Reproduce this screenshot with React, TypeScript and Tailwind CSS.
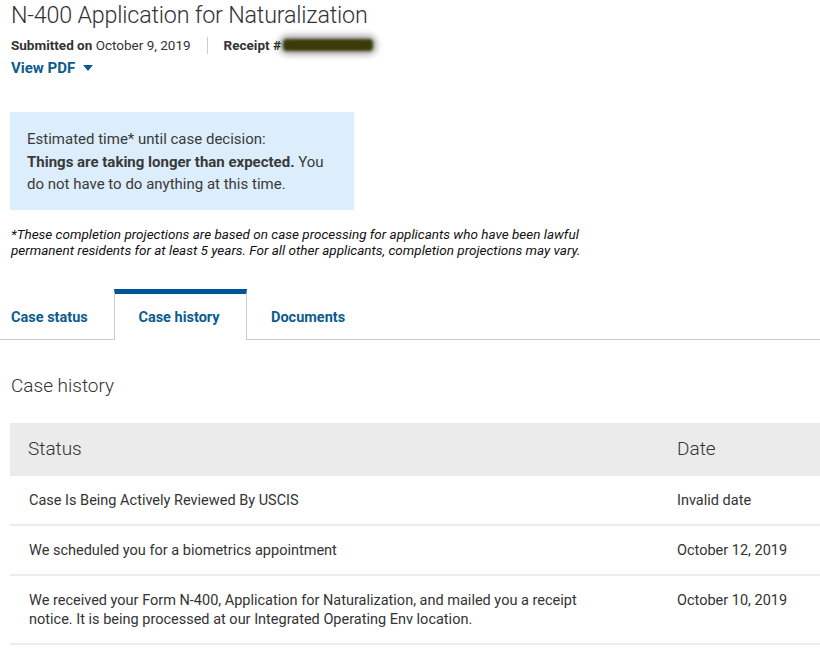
import React from 'react';

const rows = [
  { status: 'Case Is Being Actively Reviewed By USCIS', date: 'Invalid date' },
  { status: 'We scheduled you for a biometrics appointment', date: 'October 12, 2019' },
  {
    status:
      'We received your Form N-400, Application for Naturalization, and mailed you a receipt notice. It is being processed at our Integrated Operating Env location.',
    date: 'October 10, 2019',
  },
];

const tabs = ['Case status', 'Case history', 'Documents'];

export default function App() {
  return (
    <div className="min-h-screen bg-white text-[#333] font-['Roboto','Liberation_Sans',sans-serif] overflow-hidden">
      {/* Header */}
      <div className="pl-[11px]">
        <h1 className="text-[23.3px] leading-[30px] font-light text-[#333] tracking-[-0.2px]">
          N-400 Application for Naturalization
        </h1>
        <div className="flex items-center h-[28px] text-[13.5px] mt-[1px]">
          <span>
            <b className="font-bold">Submitted on</b> October 9, 2019
          </span>
          <span className="mx-[16px] h-[17px] w-px bg-[#ccc]" />
          <b className="font-bold">Receipt #</b>
          <span className="ml-[2px] inline-block h-[12px] w-[90px] rounded-sm bg-[#3b3a08] blur-[1.5px] shadow-[0_0_6px_3px_rgba(0,0,0,0.4)]" />
        </div>
        <button className="flex items-center gap-[8px] text-[15px] font-bold text-[#0b5c8e] h-[18px]">
          View PDF
          <svg width="10" height="6" viewBox="0 0 10 6">
            <path d="M0 0h10L5 6z" fill="#0b5c8e" />
          </svg>
        </button>
      </div>

      {/* Estimate box */}
      <div className="ml-[10px] mt-[35px] w-[344px] bg-[#dcedfb] pl-[17px] pr-[14px] pt-[16px] pb-[14px] text-[15px] leading-[22.5px] text-[#3a3a3a]">
        <p>Estimated time* until case decision:</p>
        <p>
          <b className="font-bold">Things are taking longer than expected.</b> You do not have to do anything at this
          time.
        </p>
      </div>

      <p className="ml-[11px] mt-[16px] text-[13.5px] leading-[16px] italic text-[#111] w-[592px]">
        *These completion projections are based on case processing for applicants who have been lawful permanent
        residents for at least 5 years. For all other applicants, completion projections may vary.
      </p>

      {/* Tabs */}
      <div className="mt-[31px] flex items-end border-b border-[#ccc] h-[51px]">
        {tabs.map((t) =>
          t === 'Case history' ? (
            <div
              key={t}
              className="-mb-px flex h-[51px] w-[133px] items-center justify-center border-x border-[#ccc] border-t-[5px] border-t-[#00549a] bg-white text-[14.5px] font-bold text-[#0b5c8e] pr-[3px] pt-[3px]"
            >
              {t}
            </div>
          ) : (
            <div
              key={t}
              className={`flex h-[50px] items-center text-[14.5px] font-bold text-[#0b5c8e] pt-[9px] ${
                t === 'Case status' ? 'pl-[11px] w-[114px]' : 'pl-[24px]'
              }`}
            >
              {t}
            </div>
          )
        )}
      </div>

      {/* Case history */}
      <h2 className="ml-[11px] mt-[32px] text-[19px] leading-[28px] font-light text-[#333]">Case history</h2>

      <div className="ml-[10px] mt-[23px] w-[830px]">
        <div className="grid grid-cols-[649px_1fr] h-[53px] items-center bg-[#ebebeb] text-[19px] font-light text-[#333]">
          <div className="pl-[18px]">Status</div>
          <div className="pl-[18px]">Date</div>
        </div>
        {rows.map((r) => (
          <div
            key={r.date}
            className="grid grid-cols-[649px_1fr] border-b-2 border-[#ececec] pt-[15px] pb-[14px] text-[14.5px] leading-[19px] text-[#333]"
          >
            <div className="pl-[19px] pr-[36px]">{r.status}</div>
            <div className="pl-[18px]">{r.date}</div>
          </div>
        ))}
      </div>
    </div>
  );
}
